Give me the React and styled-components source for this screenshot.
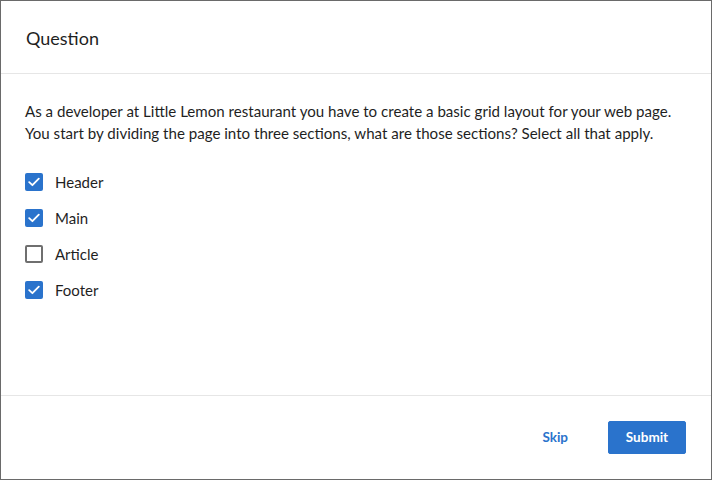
import React, { useState } from "react";
import styled, { createGlobalStyle } from "styled-components";

const GlobalStyle = createGlobalStyle`
	html, body {
		margin: 0;
		padding: 0;
		background: #ffffff;
	}
	body {
		font-family: Lato, "Noto Sans", sans-serif;
		color: #1f1f1f;
	}
	* {
		box-sizing: border-box;
	}
`;

const Dialog = styled.div`
	width: 712px;
	height: 480px;
	display: flex;
	flex-direction: column;
	border: 1px solid #6a6a6a;
	background: #fff;
`;

const Header = styled.div`
	height: 73px;
	display: flex;
	align-items: center;
	padding: 0 25px;
	border-bottom: 1px solid #e6e6e6;
`;

const Title = styled.h2`
	margin: 0;
	font-size: 18px;
	font-weight: 400;
	color: #1f1f1f;
	padding-top: 2px;
`;

const Body = styled.div`
	flex: 1;
	padding: 26px 24px 0;
`;

const Prompt = styled.p`
	margin: 0 0 20px;
	font-size: 15.1px;
	line-height: 22px;
	color: #1f1f1f;
`;

const Options = styled.div`
	display: flex;
	flex-direction: column;
`;

const Option = styled.label`
	height: 36px;
	display: flex;
	align-items: center;
	gap: 12px;
	font-size: 15px;
	color: #1f1f1f;
	cursor: pointer;
`;

const Box = styled.span`
	width: 18px;
	height: 18px;
	border-radius: 2px;
	display: flex;
	align-items: center;
	justify-content: center;
	background: ${(p) => (p.checked ? "#2a73cc" : "#fff")};
	border: ${(p) => (p.checked ? "none" : "2px solid #6f6f6f")};
`;

const Footer = styled.div`
	height: 84px;
	display: flex;
	align-items: center;
	justify-content: flex-end;
	gap: 24px;
	padding: 0 25px 1px;
	border-top: 1px solid #e6e6e6;
`;

const TextButton = styled.button`
	background: none;
	border: none;
	padding: 8px 16px;
	font-family: inherit;
	font-size: 13.5px;
	font-weight: 700;
	color: #2a73cc;
	cursor: pointer;
`;

const PrimaryButton = styled.button`
	width: 78px;
	height: 33px;
	background: #2a73cc;
	border: 1px solid #2a73cc;
	border-radius: 2px;
	font-family: inherit;
	font-size: 13.5px;
	font-weight: 700;
	color: #fff;
	cursor: pointer;
`;

const Check = () => (
	<svg width="12" height="10" viewBox="0 0 12 10">
		<path
			d="M1.2 5.2 L4.4 8.2 L10.8 1.6"
			fill="none"
			stroke="#fff"
			strokeWidth="1.8"
			strokeLinecap="round"
			strokeLinejoin="round"
		/>
	</svg>
);

const initial = [
	{ label: "Header", checked: true },
	{ label: "Main", checked: true },
	{ label: "Article", checked: false },
	{ label: "Footer", checked: true },
];

export default function App() {
	const [options, setOptions] = useState(initial);

	const toggle = (i) =>
		setOptions(options.map((o, j) => (j === i ? { ...o, checked: !o.checked } : o)));

	return (
		<>
			<GlobalStyle />
			<Dialog>
				<Header>
					<Title>Question</Title>
				</Header>
				<Body>
					<Prompt>
						As a developer at Little Lemon restaurant you have to create a basic grid
						layout for your web page.
						<br />
						You start by dividing the page into three sections, what are those
						sections? Select all that apply.
					</Prompt>
					<Options>
						{options.map((o, i) => (
							<Option key={o.label} onClick={() => toggle(i)}>
								<Box checked={o.checked}>{o.checked && <Check />}</Box>
								{o.label}
							</Option>
						))}
					</Options>
				</Body>
				<Footer>
					<TextButton>Skip</TextButton>
					<PrimaryButton>Submit</PrimaryButton>
				</Footer>
			</Dialog>
		</>
	);
}
